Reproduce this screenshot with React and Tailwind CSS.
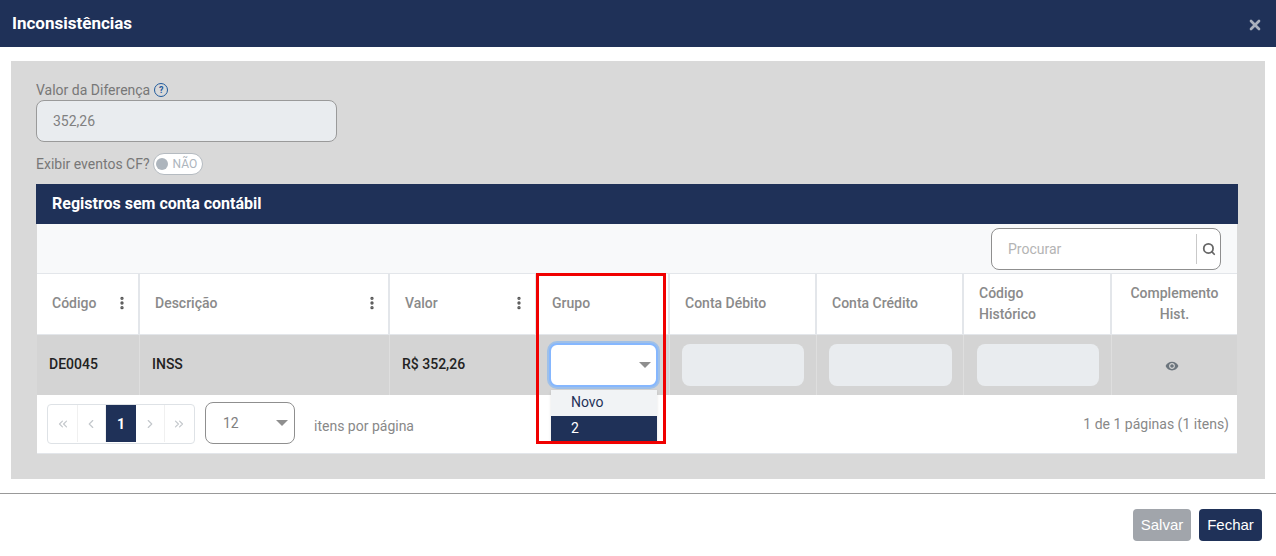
import React from 'react';
import { Search, EllipsisVertical, ChevronLeft, ChevronRight, ChevronsLeft, ChevronsRight, X } from 'lucide-react';

const gridCols = 'grid grid-cols-[103px_250px_147px_133px_147px_147px_148px_125px]';

const HeaderCell = ({ children, menu, className = '' }) => (
  <div className={`flex items-center justify-between pl-[15px] pr-[8px] pb-[2px] text-sm font-medium leading-[21px] text-[#8a8a8a] border-r-2 border-[#e3e6ea] last:border-r-0 ${className}`}>
    <span>{children}</span>
    {menu && <EllipsisVertical size={16} strokeWidth={3} className="text-[#555]" />}
  </div>
);

const BodyCell = ({ children, className = '' }) => (
  <div className={`flex items-center border-r border-[#dedede] last:border-r-0 ${className}`}>{children}</div>
);

const Caret = () => (
  <span className="w-0 h-0 border-x-[6px] border-x-transparent border-t-[6px] border-t-[#8f8f8f]" />
);

const PageButton = ({ children, active }) => (
  <div className={`flex items-center justify-center h-[37px] ${active ? 'w-[30px] bg-[#1f3158] text-white font-bold text-sm' : 'w-[28.5px] text-[#c4c8cc] border-r border-[#f0f0f0] last:border-r-0'}`}>
    {children}
  </div>
);

const EyeIcon = () => (
  <svg width="14" height="14" viewBox="0 0 24 24" fill="#6c757d" className="mt-[2px]">
    <path d="M12 4.5C7 4.5 2.73 7.61 1 12c1.73 4.39 6 7.5 11 7.5s9.27-3.11 11-7.5c-1.73-4.39-6-7.5-11-7.5zM12 17c-2.76 0-5-2.24-5-5s2.24-5 5-5 5 2.24 5 5-2.24 5-5 5zm0-8c-1.66 0-3 1.34-3 3s1.34 3 3 3 3-1.34 3-3-1.34-3-3-3z" />
  </svg>
);

const App = () => {
  return (
    <div className="relative w-[1276px] h-[556px] overflow-hidden bg-white font-['Roboto',sans-serif]">
      <header className="flex items-center justify-between h-[47px] pl-3 pr-[13px] bg-[#1f3158]">
        <h1 className="text-[17px] font-bold text-white">Inconsistências</h1>
        <X size={16} strokeWidth={4} className="text-[#a9b0bd] mt-[2px]" />
      </header>

      <div className="mt-[14px] ml-[11px] w-[1254px] h-[418px] bg-[#d9d9d9] pt-[19px] px-[25px]">
        <div className="flex items-center h-[20px] gap-[4px] text-sm text-[#777]">
          <span>Valor da Diferença</span>
          <span className="flex items-center justify-center w-[14px] h-[14px] rounded-full border border-[#1f5a9c] text-[9px] font-bold text-[#1f5a9c]">?</span>
        </div>
        <div className="flex items-center w-[301px] h-[42px] pl-4 rounded-lg border border-[#9a9a9a] bg-[#e9ecef] text-sm text-[#808080]">
          352,26
        </div>
        <div className="flex items-center h-[21px] mt-[11px] gap-[3px] text-sm text-[#777]">
          <span>Exibir eventos CF?</span>
          <span className="flex items-center w-[50px] h-[22px] pl-[2px] gap-[5px] rounded-full border border-[#b5bbc1] bg-white">
            <span className="w-[12px] h-[12px] rounded-full bg-[#adb5bd]" />
            <span className="text-xs text-[#adb5bd]">NÃO</span>
          </span>
        </div>

        <div className="mt-[10px] w-[1202px]">
          <div className="flex items-center h-[40px] pl-4 bg-[#1f3158] text-base font-bold text-white">
            Registros sem conta contábil
          </div>
          <div className="ml-px w-[1200px] bg-white">
            <div className="flex items-center justify-end h-[50px] pt-px pr-[16px] bg-[#f8f9fa] border-b border-[#e3e6ea]">
              <div className="flex items-center w-[230px] h-[42px] pl-4 pr-[4px] rounded-lg border border-[#8f8f8f] bg-white">
                <span className="flex-1 text-sm text-[#b4b4b4]">Procurar</span>
                <span className="flex items-center h-[30px] pl-[5px] border-l border-[#c9c9c9]">
                  <Search size={14} strokeWidth={3} className="text-[#666]" />
                </span>
              </div>
            </div>

            <div className={`${gridCols} h-[61px] border-b border-[#e3e6ea]`}>
              <HeaderCell menu>Código</HeaderCell>
              <HeaderCell menu>Descrição</HeaderCell>
              <HeaderCell menu>Valor</HeaderCell>
              <HeaderCell>Grupo</HeaderCell>
              <HeaderCell>Conta Débito</HeaderCell>
              <HeaderCell>Conta Crédito</HeaderCell>
              <HeaderCell className="!pb-0">Código<br />Histórico</HeaderCell>
              <HeaderCell className="justify-center !px-1 !pb-0 text-center">Complemento<br />Hist.</HeaderCell>
            </div>

            <div className={`${gridCols} h-[60px] bg-[#d4d4d4] text-sm font-medium text-[#222]`}>
              <BodyCell className="pl-3 pb-[2px]">DE0045</BodyCell>
              <BodyCell className="pl-[12px] pb-[2px]">INSS</BodyCell>
              <BodyCell className="pl-[12px] pb-[2px]">R$ 352,26</BodyCell>
              <BodyCell className="pl-[12px]">
                <div className="flex items-center justify-end w-[109px] h-[44px] pr-[5px] rounded-lg border-2 border-[#86b7fe] bg-white shadow-[0_0_0_2px_#9fc0e8]">
                  <Caret />
                </div>
              </BodyCell>
              <BodyCell className="pl-[12px]"><div className="w-[122px] h-[42px] rounded-lg bg-[#e9ecef]" /></BodyCell>
              <BodyCell className="pl-[12px]"><div className="w-[123px] h-[42px] rounded-lg bg-[#e9ecef]" /></BodyCell>
              <BodyCell className="pl-[13px]"><div className="w-[122px] h-[42px] rounded-lg bg-[#e9ecef]" /></BodyCell>
              <BodyCell className="justify-center pr-[6px]"><EyeIcon /></BodyCell>
            </div>

            <div className="flex items-center h-[59px] pb-px pl-[10px] pr-2 border-b border-[#e3e6ea]">
              <div className="flex items-center h-[40px] px-px rounded border border-[#dee2e6]">
                <PageButton><ChevronsLeft size={14} /></PageButton>
                <PageButton><ChevronLeft size={14} /></PageButton>
                <PageButton active>1</PageButton>
                <PageButton><ChevronRight size={14} /></PageButton>
                <PageButton><ChevronsRight size={14} /></PageButton>
              </div>
              <div className="flex items-center justify-between w-[90px] h-[42px] ml-[10px] -mt-[2px] pl-[17px] pr-[6px] rounded-lg border border-[#8f8f8f] text-sm text-[#808080]">
                <span>12</span>
                <Caret />
              </div>
              <span className="ml-[19px] mt-[5px] text-sm text-[#888]">itens por página</span>
              <span className="ml-auto text-sm text-[#888]">1 de 1 páginas (1 itens)</span>
            </div>
          </div>
        </div>
      </div>

      <footer className="flex justify-end gap-2 mt-[14px] h-[63px] pt-[15px] pr-[14px] border-t border-[#999] font-['Liberation_Sans',sans-serif]">
        <button className="w-[58px] h-[32px] rounded bg-[#a1a5ab] text-[15px] text-white">Salvar</button>
        <button className="w-[63px] h-[32px] rounded bg-[#1f3158] text-[15px] text-white">Fechar</button>
      </footer>

      {/* lista aberta do select */}
      <div className="absolute left-[551px] top-[390px] w-[106px] text-sm shadow-sm">
        <div className="flex items-center h-[26px] pb-[2px] pl-[20px] bg-[#f1f3f5] text-[#1f3158]">Novo</div>
        <div className="flex items-center h-[26px] pb-[2px] pl-[20px] bg-[#1f3158] text-white">2</div>
      </div>
      {/* marcacao vermelha */}
      <div className="absolute left-[536px] top-[273px] w-[130px] h-[171px] border-[3px] border-[#f00000]" />
    </div>
  );
};

export default App;
